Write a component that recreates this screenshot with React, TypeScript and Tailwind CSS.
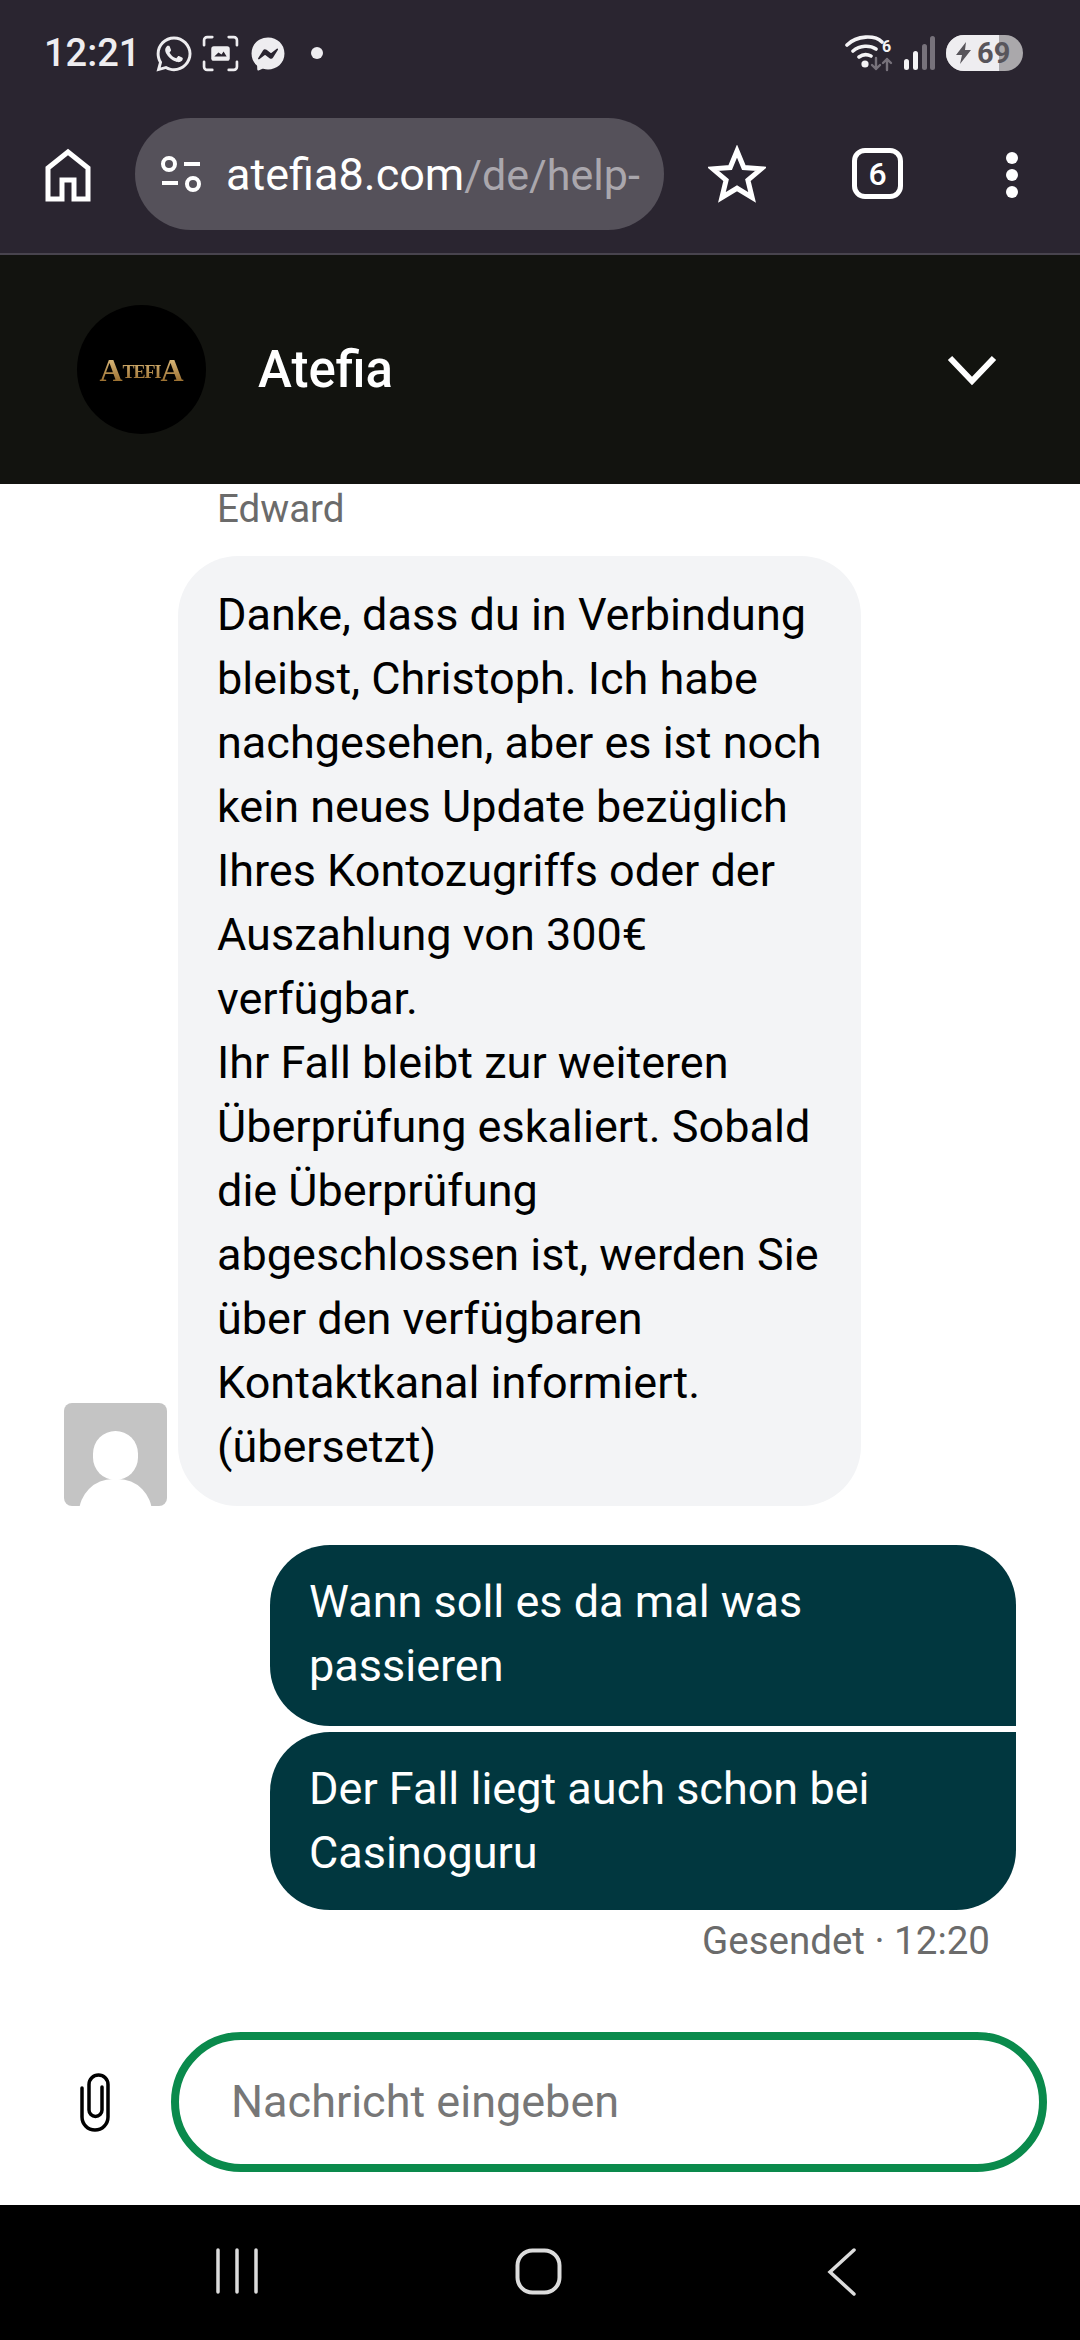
import React from 'react';
import { FaWhatsapp, FaFacebookMessenger } from 'react-icons/fa';

const leftLines = [
  'Danke, dass du in Verbindung',
  'bleibst, Christoph. Ich habe',
  'nachgesehen, aber es ist noch',
  'kein neues Update bezüglich',
  'Ihres Kontozugriffs oder der',
  'Auszahlung von 300€',
  'verfügbar.',
  'Ihr Fall bleibt zur weiteren',
  'Überprüfung eskaliert. Sobald',
  'die Überprüfung',
  'abgeschlossen ist, werden Sie',
  'über den verfügbaren',
  'Kontaktkanal informiert.',
  '(übersetzt)',
];

function StatusBar() {
  return (
    <div className="h-[106px] pl-[44px] pr-[57px] flex items-center justify-between text-[#eeedf0]">
      <div className="flex items-center">
        <span className="text-[38px] leading-none font-medium w-[110px]">12:21</span>
        <FaWhatsapp className="w-[40px] h-[40px] mt-[1px]" />
        <svg className="ml-[8px]" width="37" height="37" viewBox="0 0 36 36" fill="none">
          <path d="M2 10V5a3 3 0 0 1 3-3h5M26 2h5a3 3 0 0 1 3 3v5M34 26v5a3 3 0 0 1-3 3h-5M10 34H5a3 3 0 0 1-3-3v-5" stroke="currentColor" strokeWidth="2.6" strokeLinecap="round" />
          <rect x="9" y="11" width="18" height="14" rx="2.5" fill="currentColor" />
          <path d="M12 21l4-4 3 2 2-3 3 5z" fill="#2a2530" />
        </svg>
        <FaFacebookMessenger className="ml-[12px] w-[34px] h-[34px] mt-[2px]" />
        <span className="ml-[26px] w-[12px] h-[12px] rounded-full bg-[#eeedf0]" />
      </div>
      <div className="flex items-center">
        <svg width="50" height="38" viewBox="0 0 50 38" fill="none">
          <path d="M2 11C12 1 30 1 37 8M8 17c7-6 17-6 23-2M14 23c4-3 8-3 12-1" stroke="#f4f3f5" strokeWidth="3.6" strokeLinecap="round" />
          <circle cx="20" cy="30" r="3.6" fill="#f4f3f5" />
          <path d="M31 24v11M27 31l4 4 4-4M42 36V25M38 29l4-4 4 4" stroke="#77727b" strokeWidth="2.4" strokeLinecap="round" strokeLinejoin="round" />
          <text x="37" y="18" fontSize="16" fontWeight="700" fontFamily="Roboto, sans-serif" fill="#f4f3f5">6</text>
        </svg>
        <svg className="ml-[8px]" width="32" height="36" viewBox="0 0 32 36" fill="none">
          <rect x="1" y="24" width="5" height="11" rx="2.5" fill="#f4f3f5" />
          <rect x="10" y="16" width="5" height="19" rx="2.5" fill="#f4f3f5" />
          <rect x="19" y="9" width="5" height="26" rx="2.5" fill="#77727b" />
          <rect x="27" y="1" width="5" height="34" rx="2.5" fill="#77727b" />
        </svg>
        <div className="ml-[11px] w-[77px] h-[36px] rounded-full overflow-hidden relative bg-[#aaa8ab]">
          <div className="absolute inset-y-0 left-0 w-[53px] bg-[#eeedf0]" />
          <div className="absolute inset-0 flex items-center pl-[9px] gap-[5px] text-[#58555b]">
            <svg width="17" height="24" viewBox="0 0 17 24" fill="currentColor"><path d="M11 1L1 14h6l-2 9 11-14h-6z" /></svg>
            <span className="text-[29px] leading-none font-bold">69</span>
          </div>
        </div>
      </div>
    </div>
  );
}

function BrowserBar() {
  return (
    <div className="h-[149px] border-b-2 border-[#48444e] flex items-start pt-[12px]">
      <svg className="ml-[45px] mt-[30px]" width="46" height="54" viewBox="0 0 46 54" fill="none">
        <path d="M3 51V20L23 4l20 16v31H29V32H17v19z" stroke="#fff" strokeWidth="5" />
      </svg>
      <div className="ml-[44px] w-[529px] h-[112px] rounded-full bg-[#55515a] flex items-center pl-[25px] overflow-hidden">
        <svg className="shrink-0" width="42" height="38" viewBox="0 0 42 38" fill="none">
          <circle cx="9" cy="9" r="6" stroke="#fff" strokeWidth="4" />
          <path d="M24 9h16M2 28h16" stroke="#fff" strokeWidth="4" />
          <circle cx="33" cy="29" r="6" stroke="#fff" strokeWidth="4" />
        </svg>
        <span className="ml-[24px] text-[45px] leading-none whitespace-nowrap text-white">
          atefia8.com<span className="text-[43px] text-[#aaa7ad]">/de/help-</span>
        </span>
      </div>
      <svg className="ml-[44px] mt-[27px]" width="58" height="58" viewBox="0 0 58 58" fill="none">
        <path d="M29 6l6.800 16.500 17.500 1.300-13.400 11.400 4.200 17.300L29 43.300l-15.100 9.200 4.200-17.300L4.700 23.800l17.500-1.300z" stroke="#fff" strokeWidth="5" />
      </svg>
      <div className="ml-[86px] mt-[30px] w-[51px] h-[51px] rounded-[13px] border-[5px] border-white flex items-center justify-center text-white text-[32px] font-medium leading-none">
        6
      </div>
      <div className="ml-[103px] mt-[34px] flex flex-col gap-[5px]">
        <span className="w-[12px] h-[12px] rounded-full bg-white" />
        <span className="w-[12px] h-[12px] rounded-full bg-white" />
        <span className="w-[12px] h-[12px] rounded-full bg-white" />
      </div>
    </div>
  );
}

function ChatHeader() {
  return (
    <div className="h-[229px] bg-[#12130f] flex items-center pl-[77px] pr-[83px]">
      <div className="w-[129px] h-[129px] rounded-full bg-black flex items-center justify-center">
        <span
          className="bg-gradient-to-b from-[#e8c98a] to-[#8f6220] bg-clip-text text-transparent font-bold leading-none"
          style={{ fontFamily: '"Liberation Serif", serif' }}
        >
          <span className="text-[32px] align-[-3px]">A</span>
          <span className="text-[18px] tracking-[-1px]">TEFI</span>
          <span className="text-[32px] align-[-3px]">A</span>
        </span>
      </div>
      <span className="ml-[52px] text-[51px] font-medium text-white leading-none">Atefia</span>
      <svg className="ml-auto" width="50" height="32" viewBox="0 0 50 32" fill="none">
        <path d="M3 4l22 23L47 4" stroke="#fff" strokeWidth="6" />
      </svg>
    </div>
  );
}

function Messages() {
  return (
    <div className="flex-1 flex flex-col pt-[3px] text-[45px] leading-[64px]">
      <div className="pl-[217px] text-[38.5px] leading-[44px] text-[#6b6b6b]">Edward</div>
      <div className="mt-[25px] flex items-end pl-[64px]">
        <div className="w-[103px] h-[103px] rounded-[8px] bg-[#c4c4c4] overflow-hidden relative shrink-0">
          <div className="absolute left-[29px] top-[28px] w-[45px] h-[49px] rounded-full bg-white" />
          <div className="absolute left-[15px] top-[76px] w-[73px] h-[40px] rounded-t-[34px] bg-white" />
        </div>
        <div className="ml-[11px] w-[683px] h-[950px] rounded-[60px] bg-[#f3f4f6] pl-[39px] pt-[27px] text-black whitespace-nowrap">
          {leftLines.map((line) => (
            <div key={line}>{line}</div>
          ))}
        </div>
      </div>
      <div className="mt-[39px] ml-[270px] w-[746px] flex flex-col gap-[6px] text-white">
        <div className="h-[181px] rounded-[60px] rounded-br-none bg-[#01373f] pl-[39px] pt-[25px]">
          <div>Wann soll es da mal was</div>
          <div>passieren</div>
        </div>
        <div className="h-[178px] rounded-[60px] rounded-tr-none bg-[#01373f] pl-[39px] pt-[25px]">
          <div>Der Fall liegt auch schon bei</div>
          <div>Casinoguru</div>
        </div>
      </div>
      <div className="mt-[9px] pr-[90px] text-right text-[38.5px] leading-[44px] text-[#6b6b6b]">Gesendet · 12:20</div>
    </div>
  );
}

function InputBar() {
  return (
    <div className="h-[204px] flex items-start pt-[31px] pl-[78px]">
      <svg className="mt-[38px]" width="36" height="66" viewBox="18 20 36 66" fill="none">
        <path d="M22 38v29a13 13 0 0 0 26 0V34.500a9.500 9.500 0 0 0-19 0V60a6.500 6.500 0 0 0 13 0V37" stroke="#000" strokeWidth="3.500" strokeLinecap="round" />
      </svg>
      <div className="ml-[57px] w-[876px] h-[140px] rounded-full border-[8px] border-[#0a8a4c] flex items-center pl-[52px] text-[45px] text-[#777777]">
        Nachricht eingeben
      </div>
    </div>
  );
}

function NavBar() {
  return (
    <div className="h-[135px] bg-black flex items-start">
      <svg className="ml-[215px] mt-[43px]" width="44" height="48" viewBox="0 0 44 48" fill="none">
        <path d="M3 2v42M22 2v42M41 2v42" stroke="#dcdcdc" strokeWidth="3.500" strokeLinecap="round" />
      </svg>
      <svg className="ml-[256px] mt-[43px]" width="47" height="47" viewBox="0 0 47 47" fill="none">
        <rect x="2.500" y="2.500" width="42" height="42" rx="15" stroke="#dcdcdc" strokeWidth="4" />
      </svg>
      <svg className="ml-[264px] mt-[43px]" width="32" height="48" viewBox="0 0 32 48" fill="none">
        <path d="M28 2L4 24l24 22" stroke="#dcdcdc" strokeWidth="3.500" strokeLinecap="round" />
      </svg>
    </div>
  );
}

export default function App() {
  return (
    <div className="w-[1080px] h-[2340px] flex flex-col bg-white overflow-hidden" style={{ fontFamily: 'Roboto, sans-serif' }}>
      <div className="bg-[#2a2530]">
        <StatusBar />
        <BrowserBar />
      </div>
      <ChatHeader />
      <Messages />
      <InputBar />
      <NavBar />
    </div>
  );
}
